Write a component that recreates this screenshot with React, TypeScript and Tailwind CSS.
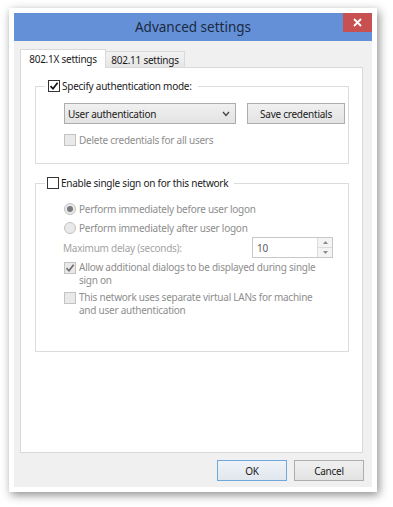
import React from 'react';

const font = "font-['Noto_Sans','Liberation_Sans',Arial,sans-serif]";

function Box({ checked, disabled }: { checked?: boolean; disabled?: boolean }) {
  return (
    <span
      className={`flex h-[12px] w-[12px] shrink-0 items-center justify-center border ${
        disabled ? 'border-[#c2c2c2] bg-[#e9e9e9]' : 'border-[#333333] bg-white'
      }`}
    >
      {checked && (
        <svg width="10" height="10" viewBox="0 0 10 10">
          <path
            d="M1.5 5.2 L4 7.8 L8.6 1.8"
            fill="none"
            stroke={disabled ? '#6f6f6f' : '#111111'}
            strokeWidth="1.7"
          />
        </svg>
      )}
    </span>
  );
}

function Radio({ selected }: { selected?: boolean }) {
  return (
    <span className="flex h-[12px] w-[12px] shrink-0 items-center justify-center rounded-full border border-[#c2c2c2] bg-[#e9e9e9]">
      {selected && <span className="h-[6px] w-[6px] rounded-full bg-[#7a7a7a]" />}
    </span>
  );
}

function Option({ children, radio, selected }: { children: React.ReactNode; radio?: boolean; selected?: boolean }) {
  return (
    <div className="flex h-[14px] items-center gap-[3px] whitespace-nowrap pl-[28px] text-[#8e8e8e]">
      {radio ? <Radio selected={selected} /> : <Box disabled />}
      <span>{children}</span>
    </div>
  );
}

function WrapOption({ lines, checked }: { lines: string[]; checked?: boolean }) {
  return (
    <div className="flex items-start gap-[3px] whitespace-nowrap pl-[28px] text-[#8e8e8e]">
      <span className="mt-[1px]">
        <Box disabled checked={checked} />
      </span>
      <span className="leading-[13px]">
        {lines.map((l) => (
          <span key={l} className="block">
            {l}
          </span>
        ))}
      </span>
    </div>
  );
}

export default function App() {
  return (
    <div
      className={`h-[507px] w-[393px] overflow-hidden bg-white ${font} text-[10px] leading-[14px] tracking-[-0.25px] text-[#1b1b1b]`}
    >
      <div className="ml-[9px] mt-[8px] flex h-[484px] w-[368px] flex-col bg-white p-[5px] shadow-[2px_3px_9px_rgba(0,0,0,0.45)]">
        {/* title bar */}
        <div className="flex h-[28px] items-start bg-[#6490d8]">
          <div className="flex h-[28px] flex-1 items-center justify-center pl-[29px] text-[13.5px] tracking-normal text-[#1b2a40]">
            Advanced settings
          </div>
          <div className="flex h-[19px] w-[29px] items-center justify-center bg-[#c75050]">
            <svg width="9" height="9" viewBox="0 0 9 9">
              <path d="M1 1 L8 8 M8 1 L1 8" stroke="white" strokeWidth="1.8" />
            </svg>
          </div>
        </div>

        {/* body */}
        <div className="flex flex-1 flex-col bg-[#f0f0f0] pl-[6px] pt-[8px]">
          <div className="flex h-[18px] items-end whitespace-nowrap">
            <div className="relative z-10 -mb-[1px] flex h-[19px] w-[86px] items-center justify-center border border-b-0 border-[#d9d9d9] bg-white">
              802.1X settings
            </div>
            <div className="flex h-[16px] w-[79px] items-center justify-center border border-b-0 border-l-0 border-[#d9d9d9] bg-gradient-to-b from-[#f2f2f2] to-[#e6e6e6]">
              802.11 settings
            </div>
          </div>

          <div className="h-[386px] w-[343px] border border-[#d9d9d9] bg-white pl-[14px]">
            {/* group 1 */}
            <fieldset className="mt-[11px] h-[85px] w-[314px] border border-[#dcdcdc] px-0">
              <legend className="ml-[9px] flex h-[14px] items-center gap-[2px] whitespace-nowrap pl-[3px] pr-[6px]">
                <Box checked />
                <span>Specify authentication mode:</span>
              </legend>
              <div className="flex items-center whitespace-nowrap pl-[28px] pt-[10px]">
                <div className="flex h-[21px] w-[172px] items-center justify-between border border-[#acacac] bg-gradient-to-b from-[#f0f0f0] to-[#e3e3e3] pl-[3px] pr-[5px]">
                  <span>User authentication</span>
                  <svg width="8" height="6" viewBox="0 0 8 6">
                    <path d="M1 1 L4 4.5 L7 1" fill="none" stroke="#444" strokeWidth="1.3" />
                  </svg>
                </div>
                <div className="ml-[11px] flex h-[21px] w-[98px] items-center justify-center border border-[#adadad] bg-gradient-to-b from-[#f0f0f0] to-[#e3e3e3]">
                  Save credentials
                </div>
              </div>
              <div className="mt-[9px]">
                <Option>Delete credentials for all users</Option>
              </div>
            </fieldset>

            {/* group 2 */}
            <fieldset className="mt-[12px] h-[176px] w-[314px] border border-[#dcdcdc] px-0">
              <legend className="ml-[9px] flex h-[14px] items-center gap-[2px] whitespace-nowrap pl-[2px] pr-[6px]">
                <Box />
                <span>Enable single sign on for this network</span>
              </legend>
              <div className="flex flex-col pt-[12px]">
                <Option radio selected>
                  Perform immediately before user logon
                </Option>
                <div className="mt-[5px]">
                  <Option radio>Perform immediately after user logon</Option>
                </div>
                <div className="mt-[2px] flex items-center whitespace-nowrap pl-[27px]">
                  <span className="w-[189px] text-[#a3a3a3]">Maximum delay (seconds):</span>
                  <div className="flex h-[21px] w-[81px] items-stretch border border-[#c8c8c8] bg-white">
                    <span className="flex flex-1 items-center pl-[4px] text-[#5a5a5a]">10</span>
                    <span className="flex w-[15px] flex-col border-l border-[#dcdcdc] bg-[#f4f4f4]">
                      <span className="flex flex-1 items-center justify-center border-b border-[#dcdcdc]">
                        <svg width="5" height="3" viewBox="0 0 5 3">
                          <path d="M0 3 L2.5 0 L5 3 Z" fill="#8a8a8a" />
                        </svg>
                      </span>
                      <span className="flex flex-1 items-center justify-center">
                        <svg width="5" height="3" viewBox="0 0 5 3">
                          <path d="M0 0 L2.5 3 L5 0 Z" fill="#8a8a8a" />
                        </svg>
                      </span>
                    </span>
                  </div>
                </div>
                <div className="mt-[3px]">
                  <WrapOption checked lines={['Allow additional dialogs to be displayed during single', 'sign on']} />
                </div>
                <div className="mt-[4px]">
                  <WrapOption lines={['This network uses separate virtual LANs for machine', 'and user authentication']} />
                </div>
              </div>
            </fieldset>
          </div>

          <div className="mt-[7px] flex justify-end gap-[7px] pr-[8px]">
            <div className="flex h-[21px] w-[70px] items-center justify-center border border-[#6fa8dc] bg-gradient-to-b from-[#eef3f8] to-[#e1e7ee]">
              OK
            </div>
            <div className="flex h-[21px] w-[70px] items-center justify-center border border-[#adadad] bg-gradient-to-b from-[#f0f0f0] to-[#e3e3e3]">
              Cancel
            </div>
          </div>
        </div>
      </div>
    </div>
  );
}
